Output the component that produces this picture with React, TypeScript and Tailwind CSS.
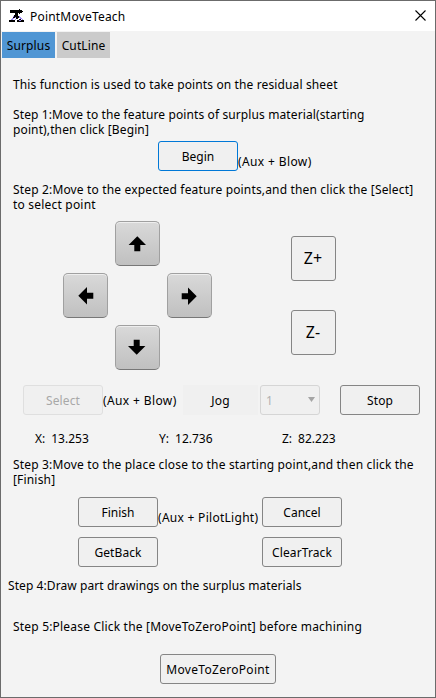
import type { ReactNode } from 'react'
import clsx from 'clsx'

const AXES = [
  { label: 'X:', value: '13.253', className: 'w-[124px]' },
  { label: 'Y:', value: '12.736', className: 'w-[123px]' },
  { label: 'Z:', value: '82.223', className: '' },
]

const ROTATION = {
  up: '-translate-x-px',
  right: 'rotate-90 -translate-x-px',
  down: 'rotate-180 -translate-x-px -translate-y-px',
  left: '-rotate-90',
}

function AppIcon() {
  return (
    <svg width="16" height="16" viewBox="0 0 16 16" shapeRendering="crispEdges">
      <path d="M1 2h9V1h1v1h2v1h1v1h-1v1h-2v1h-1V5H1z" fill="#000" />
      <path d="M6 5h3v3h1v2H9v1H7V9H6v1H5v1H4v1h2v2H0v-2h2v-1h1v-1h1V9h1V7h1z" fill="#000" />
      <path d="M4 8h1v1H4zM6 9h1v1H6zM3 10h2v1H3zM2 11h2v1H2zM6 11h1v1H6z" fill="#9a86ee" />
      <path d="M8 12h2v-1h2v1h3v2H8z" fill="#000" />
      <path d="M10 8h1v1h1v1h1v1h-2v-1h-1zM13 11h1v1h-1zM10 12h2v1h-2z" fill="#9a86ee" />
    </svg>
  )
}

function Button({
  children,
  className,
  disabled,
}: {
  children: ReactNode
  className?: string
  disabled?: boolean
}) {
  return (
    <button
      disabled={disabled}
      className={clsx(
        'flex shrink-0 items-center justify-center rounded-[3px] border bg-[#f0f0f0]',
        className ?? 'h-[30px] w-20 border-[#858585]',
      )}
    >
      {children}
    </button>
  )
}

function ArrowButton({ direction }: { direction: keyof typeof ROTATION }) {
  return (
    <button
      aria-label={direction}
      className="flex size-[45px] items-center justify-center rounded-[5px] border border-[#a0a0a0] border-b-[#777] bg-linear-to-b from-[#d9d9d9] to-[#c0c0c0] shadow-[inset_0_1px_0_#eee]"
    >
      <svg width="18" height="18" viewBox="0 0 18 18" className={ROTATION[direction]}>
        <path d="M9.3 1.3 18 10h-5.7v6.3h-6V10H.6z" fill="#000" />
      </svg>
    </button>
  )
}

export default function App() {
  return (
    <div className="flex h-[698px] w-[436px] flex-col border border-[#6b6b6b] bg-[#f3f3f3] font-['Noto_Sans','Open_Sans',sans-serif] text-[12px] leading-[15px] text-black">
      <header className="flex h-[30px] shrink-0 items-center bg-white pr-[9px] pl-2">
        <AppIcon />
        <h1 className="ml-[5px] tracking-[0.2px]">PointMoveTeach</h1>
        <button aria-label="Close" className="-mt-0.5 ml-auto">
          <svg width="11" height="11" viewBox="0 0 11 11">
            <path d="M.5.5l10 10M10.5.5l-10 10" stroke="#000" strokeWidth="1.1" />
          </svg>
        </button>
      </header>

      <nav className="mt-px ml-px flex h-[26px] shrink-0 gap-0.5">
        <button className="w-[53px] bg-[#5096d4] pt-px tracking-[0.15px]">Surplus</button>
        <button className="w-[53px] bg-[#cbcbcb] pt-px tracking-[0.1px]">CutLine</button>
      </nav>

      <main className="flex flex-col whitespace-nowrap">
        <p className="mt-[19px] ml-3 tracking-[0.125px]">
          This function is used to take points on the residual sheet
        </p>
        <p className="mt-[15px] ml-3 tracking-[0.11px]">
          Step 1:Move to the feature points of surplus material(starting
          <br />
          <span className="tracking-[0.12px]">point),then click [Begin]</span>
        </p>
        <div className="mt-[4px] ml-[157px] flex h-[30px]">
          <Button className="h-[30px] w-20 border-[#0078d7]">Begin</Button>
          <span className="mt-[13px] tracking-[0.38px]">(Aux + Blow)</span>
        </div>
        <p className="mt-[11px] ml-3 tracking-[0.16px]">
          Step 2:Move to the expected feature points,and then click the [Select]
          <br />
          <span className="tracking-[0.2px]">to select point</span>
        </p>

        <div className="mt-[9px] ml-[62px] flex">
          <div className="grid w-[149px] grid-cols-3 gap-[7px]">
            <div className="col-start-2">
              <ArrowButton direction="up" />
            </div>
            <div className="col-start-1">
              <ArrowButton direction="left" />
            </div>
            <div className="col-start-3">
              <ArrowButton direction="right" />
            </div>
            <div className="col-start-2">
              <ArrowButton direction="down" />
            </div>
          </div>
          <div className="mt-[15px] ml-[79px] flex flex-col gap-[29px] text-[16px]">
            <Button className="size-[45px] border-[#858585] pr-px">Z+</Button>
            <Button className="size-[45px] border-[#858585] pr-px">Z-</Button>
          </div>
        </div>

        <div className="mt-[15px] ml-[22px] flex h-[30px] items-center">
          <Button disabled className="h-[30px] w-20 border-[#dfdfdf] tracking-[0.1px] text-[#a8a8a8]">
            Select
          </Button>
          <span className="w-20 tracking-[0.38px]">(Aux + Blow)</span>
          <div className="flex h-full w-[75px] items-center justify-center bg-[#f0f0f0] tracking-[0.2px]">Jog</div>
          <div className="ml-0.5 flex h-full w-[60px] items-center justify-between rounded-[3px] border border-[#d5d5d5] bg-[#f0f0f0] pr-1 pl-[5px] text-[#b0b0b0]">
            1
            <svg width="7" height="5" viewBox="0 0 7 5" className="-mt-0.5">
              <path d="M0 0h7L3.5 5z" fill="#a5a5a5" />
            </svg>
          </div>
          <Button className="ml-5 h-[30px] w-20 border-[#858585] tracking-[0.15px]">Stop</Button>
        </div>

        <div className="mt-[16px] ml-[34px] flex">
          {AXES.map((axis) => (
            <div key={axis.label} className={clsx('flex gap-1.5', axis.className)}>
              <span>{axis.label}</span>
              <span>{axis.value}</span>
            </div>
          ))}
        </div>

        <p className="mt-[11px] ml-3 tracking-[0.17px]">
          Step 3:Move to the place close to the starting point,and then click the
          <br />
          [Finish]
        </p>
        <div className="mt-[10px] ml-[77px] flex h-[30px]">
          <Button>Finish</Button>
          <span className="mt-[13px] w-[104px] tracking-[0.28px]">(Aux + PilotLight)</span>
          <Button>Cancel</Button>
        </div>
        <div className="mt-[10px] ml-[77px] flex gap-[104px] tracking-[0.1px]">
          <Button>GetBack</Button>
          <Button>ClearTrack</Button>
        </div>
        <p className="mt-[11px] ml-[7px] tracking-[0.08px]">Step 4:Draw part drawings on the surplus materials</p>
        <p className="mt-[26px] ml-3 tracking-[0.19px]">Step 5:Please Click the [MoveToZeroPoint] before machining</p>
        <Button className="mt-[20px] ml-[159px] h-[30px] w-[116px] border-[#858585] tracking-[0.3px]">
          MoveToZeroPoint
        </Button>
      </main>
    </div>
  )
}
